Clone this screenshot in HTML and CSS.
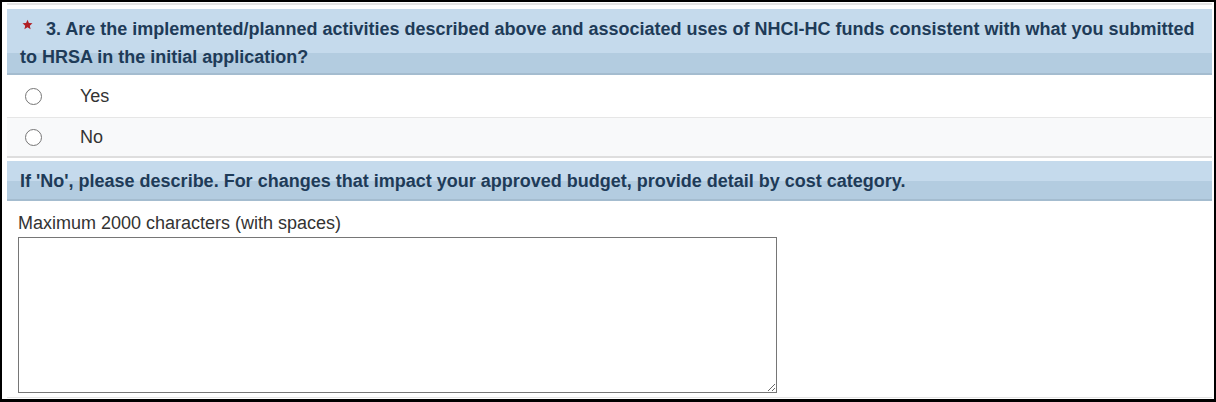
FILE: index.html
```html
<!DOCTYPE html>
<html lang="en">
<head>
  <meta charset="UTF-8">
  <title>Question 3</title>
  <meta name="viewport" content="width=device-width, initial-scale=1.0">
  <link rel="stylesheet" href="styles.css">
</head>
<body>
  <div class="frame">
    <div class="panel">
      <div class="question-head">
        <svg class="req" width="11" height="11" viewBox="0 0 24 24"><path d="M12 1.5l3.1 7.2 7.8.7-5.9 5.2 1.8 7.7L12 18.2l-6.8 4.1 1.8-7.7-5.9-5.2 7.8-.7z" fill="#b01e23"/></svg>3. Are the implemented/planned activities described above and associated uses of NHCI-HC funds consistent with what you submitted to HRSA in the initial application?
      </div>
      <label class="option">
        <input type="radio" name="q3" value="yes">
        <span>Yes</span>
      </label>
      <label class="option alt">
        <input type="radio" name="q3" value="no">
        <span>No</span>
      </label>
      <div class="question-head sub">
        If 'No', please describe. For changes that impact your approved budget, provide detail by cost category.
      </div>
      <div class="answer">
        <div class="hint">Maximum 2000 characters (with spaces)</div>
        <textarea class="describe" maxlength="2000"></textarea>
      </div>
    </div>
  </div>
</body>
</html>
```

FILE: styles.css
```css
html, body {
  margin: 0;
  padding: 0;
  background: #fff;
}
body {
  font-family: "Liberation Sans", Arial, sans-serif;
  font-size: 18px;
  color: #333;
}
.frame {
  box-sizing: border-box;
  width: 1216px;
  height: 402px;
  border: 2px solid #000;
  border-bottom-width: 3px;
  padding: 1px 2px 0 5px;
  overflow: hidden;
}
.panel {
  border-top: 2px solid #e4e4e4;
  border-bottom: 1px solid #e4e4e4;
  padding-top: 4px;
  height: 395px;
  box-sizing: border-box;
}
.question-head {
  background: linear-gradient(to top, #b3cce0 0, #b3cce0 20px, #c5daec 20px);
  border-bottom: 2px solid #a4bccf;
  color: #1e3b58;
  font-weight: bold;
  line-height: 28px;
  padding: 6px 13px 2px 13px;
}
.req {
  display: inline-block;
  vertical-align: top;
  margin: 4px 13px 0 2px;
}
.option {
  display: flex;
  align-items: center;
  height: 42px;
  border-bottom: 1px solid #e6e6e6;
  background: #fff;
  cursor: pointer;
}
.option.alt {
  height: 38px;
  background: #f8f9fa;
  border-bottom: 2px solid #dedede;
  margin-bottom: 3px;
}
.option input {
  appearance: none;
  box-sizing: border-box;
  width: 17px;
  height: 17px;
  border: 1.5px solid #767676;
  border-radius: 50%;
  background: #fff;
  margin: 0 38px 0 18px;
}
.option input:checked {
  background: radial-gradient(circle, #1e3b58 0, #1e3b58 4px, #fff 4.5px);
}
.question-head.sub {
  padding: 6px 13px 4px 13px;
  background: linear-gradient(to top, #b3cce0 0, #b3cce0 18px, #c5daec 18px);
}
.answer {
  padding: 11px 11px 0 11px;
}
.hint {
  line-height: 22px;
  margin-bottom: 3px;
}
.describe {
  display: block;
  box-sizing: border-box;
  width: 759px;
  height: 156px;
  border: 1px solid #767676;
  font-family: inherit;
  font-size: 16px;
}
```
